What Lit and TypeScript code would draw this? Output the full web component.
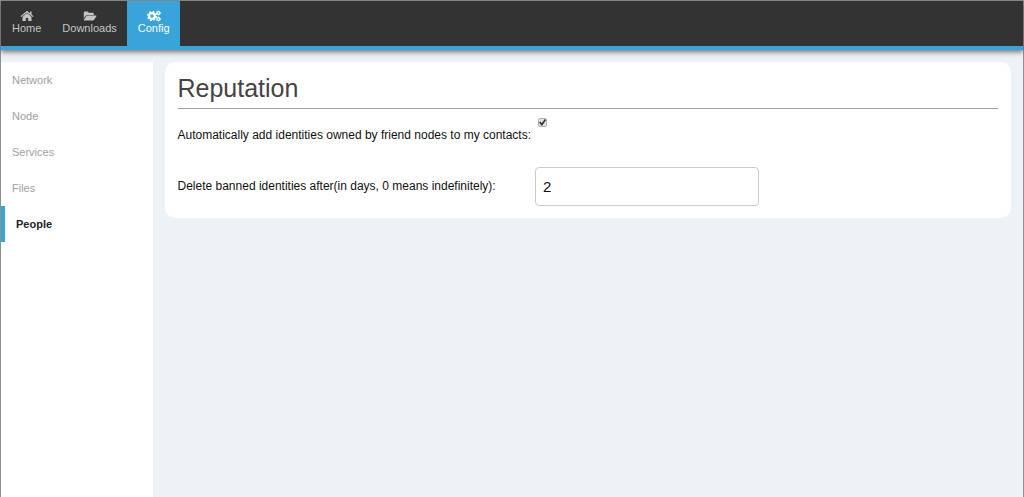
import { LitElement, html, css, svg } from "lit";
import { customElement, state } from "lit/decorators.js";
import { classMap } from "lit/directives/class-map.js";

const home = svg`<svg class="icon" viewBox="0 0 14 12" width="14" height="12" aria-hidden="true">
  <path d="M7 0.8 L9.9 3.2 V1.4 H11.5 V4.6 L13.5 6.3 L12.8 7.1 L7 2.4 L1.2 7.1 L0.5 6.3 Z"/>
  <path d="M7 3.1 L11.5 6.8 V11 H8.2 V7.9 H5.8 V11 H2.5 V6.8 Z"/></svg>`;
const folder = svg`<svg class="icon" viewBox="0 0 14 12" width="14" height="12" aria-hidden="true">
  <path d="M0.8 8.6 V2.6 Q0.8 1.6 1.8 1.6 H4.6 Q5.5 1.6 5.5 2.7 H9.8 Q10.8 2.7 10.8 3.7 V5 H4.3 Q3.2 5 2.5 6 Z"/>
  <path d="M4.4 5.6 H13 Q13.8 5.6 13.3 6.5 L11.1 9.7 Q10.6 10.5 9.8 10.5 H1.3 Q0.5 10.5 1 9.6 L3.1 6.4 Q3.6 5.6 4.4 5.6 Z"/></svg>`;
const cogs = svg`<svg class="icon" viewBox="0 0 14 12" width="14" height="12" aria-hidden="true">
  <circle cx="5" cy="6" r="2.8" fill="none" stroke="currentColor" stroke-width="2.2"/>
  <circle cx="5" cy="6" r="4.2" fill="none" stroke="currentColor" stroke-width="1.6" stroke-dasharray="1.8 1.5"/>
  <circle cx="11.4" cy="3" r="1.4" fill="none" stroke="currentColor" stroke-width="1.3"/>
  <circle cx="11.4" cy="3" r="2.1" fill="none" stroke="currentColor" stroke-width="0.8" stroke-dasharray="1.1 1.1"/>
  <circle cx="11.4" cy="9" r="1.4" fill="none" stroke="currentColor" stroke-width="1.3"/>
  <circle cx="11.4" cy="9" r="2.1" fill="none" stroke="currentColor" stroke-width="0.8" stroke-dasharray="1.1 1.1"/></svg>`;

const tabs = [
  { name: "Home", icon: home },
  { name: "Downloads", icon: folder },
  { name: "Config", icon: cogs },
];
const sections = ["Network", "Node", "Services", "Files", "People"];

@customElement("app-root")
export class AppRoot extends LitElement {
  static styles = css`
    :host {
      display: flex;
      flex-direction: column;
      box-sizing: border-box;
      min-height: 100vh;
      border: 1px solid #8f9091;
      border-bottom: 0;
      background: #ecf2f5;
      color: #111;
      font: 12px/16px "Liberation Sans", Arial, sans-serif;
    }
    a {
      text-decoration: none;
    }
    .nav {
      display: flex;
      background: #333;
      border-bottom: 4px solid #39a4d9;
      box-shadow: 0 2px 5px rgba(60, 40, 40, 0.65);
    }
    .tab {
      display: flex;
      flex-direction: column;
      align-items: center;
      padding: 9px 10px 11px 11px;
      color: #c4c4c4;
      font-size: 11px;
      line-height: 13px;
    }
    .tab.active {
      background: #39a4d9;
      color: #fff;
    }
    .icon {
      display: block;
      fill: currentColor;
    }
    .body {
      flex: 1;
      display: flex;
      gap: 12px;
      padding: 12px 12px 0 0;
    }
    .side {
      flex: 0 0 15%;
      background: #fff;
    }
    .item {
      display: block;
      padding: 10px 11px;
      color: #a0a0a0;
      font-size: 11px;
    }
    .item.active {
      border-left: 4px solid #39a4d9;
      color: #222;
      font-weight: bold;
    }
    .card {
      flex: 1;
      align-self: flex-start;
      padding: 12px 13px;
      border-radius: 10px;
      background: #fff;
    }
    .title {
      margin: 0;
      padding-bottom: 6px;
      border-bottom: 1px solid #a0a0a0;
      color: #444;
      font-size: 25px;
      font-weight: normal;
      line-height: 28px;
    }
    .fields {
      display: grid;
      grid-template-columns: max-content 224px;
      align-items: center;
      gap: 12px 4px;
      padding-top: 7px;
    }
    .label {
      line-height: 39px;
    }
    .check {
      align-self: start;
      justify-self: start;
      appearance: none;
      display: grid;
      place-items: center;
      width: 9px;
      height: 9px;
      margin: 2px 3px;
      border: 1px solid #b0b0b0;
      border-radius: 2px;
      background: #e2e2e2;
      box-sizing: border-box;
    }
    .check:checked::before {
      content: "";
      width: 7px;
      height: 7px;
      background: #333;
      clip-path: polygon(0 50%, 20% 35%, 40% 60%, 82% 0, 100% 15%, 42% 100%);
    }
    .days {
      box-sizing: border-box;
      width: 100%;
      height: 39px;
      padding: 0 7px;
      border: 1px solid #ccc;
      border-radius: 4px;
      background: #fff;
      color: #111;
      font: inherit;
      font-size: 15px;
    }
  `;

  @state() private tab = "Config";
  @state() private section = "People";

  render() {
    return html`
      <nav class="nav">
        ${tabs.map(
          (t) => html`<a
            href="#"
            class=${classMap({ tab: true, active: t.name === this.tab })}
            @click=${(e: Event) => {
              e.preventDefault();
              this.tab = t.name;
            }}
            >${t.icon}<span>${t.name}</span></a
          >`
        )}
      </nav>
      <div class="body">
        <nav class="side">
          ${sections.map(
            (s) => html`<a
              href="#"
              class=${classMap({ item: true, active: s === this.section })}
              @click=${(e: Event) => {
                e.preventDefault();
                this.section = s;
              }}
              >${s}</a
            >`
          )}
        </nav>
        <main class="card">
          <h1 class="title">Reputation</h1>
          <div class="fields">
            <label class="label" for="auto">Automatically add identities owned by friend nodes to my contacts:</label>
            <input class="check" id="auto" type="checkbox" checked />
            <label class="label" for="days">Delete banned identities after(in days, 0 means indefinitely):</label>
            <input class="days" id="days" type="text" inputmode="numeric" value="2" />
          </div>
        </main>
      </div>
    `;
  }
}
